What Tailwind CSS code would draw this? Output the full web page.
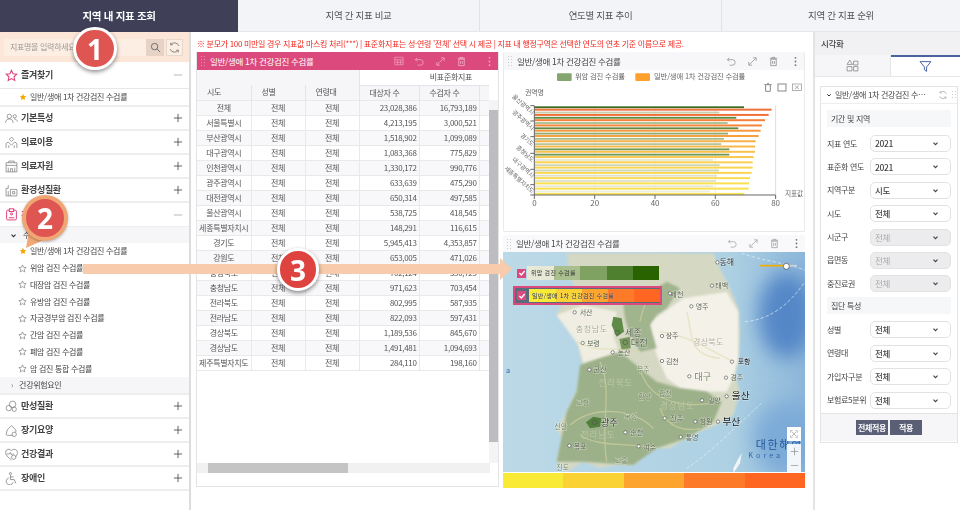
<!DOCTYPE html>
<html lang="ko">
<head>
    <meta charset="UTF-8">
    <meta name="viewport" content="width=device-width, initial-scale=1.0">
    <title>지역 내 지표 조회</title>
    <script src="https://cdn.jsdelivr.net/npm/@tailwindcss/browser@4"></script>
</head>
<body class="relative w-[960px] h-[510px] overflow-hidden bg-white text-[#444] font-['Noto_Sans_CJK_KR','Noto_Sans',sans-serif] text-[8px] tracking-[-0.04em] blur-[0.3px]">
    <!-- icon symbols -->
    <svg class="hidden">
        <symbol id="star" viewBox="0 0 24 24"><path d="M12 2.5l2.9 6.3 6.9.8-5.1 4.7 1.4 6.8L12 17.7l-6.1 3.4 1.4-6.8L2.2 9.6l6.9-.8z"/></symbol>
        <symbol id="undo" viewBox="0 0 24 24"><path d="M7 4L3 8l4 4M3 8h11a6 6 0 0 1 0 12H8" fill="none" stroke="currentColor" stroke-width="1.8"/></symbol>
        <symbol id="expand" viewBox="0 0 24 24"><path d="M4 20L20 4M13 4h7v7M4 13v7h7" fill="none" stroke="currentColor" stroke-width="1.8"/></symbol>
        <symbol id="trash" viewBox="0 0 24 24"><path d="M6 7h12v14H6zM4 5h16M9 5V3h6v2M10 11v6M14 11v6" fill="none" stroke="currentColor" stroke-width="2"/></symbol>
        <symbol id="dots" viewBox="0 0 24 24"><circle cx="12" cy="4" r="2" fill="currentColor"/><circle cx="12" cy="12" r="2" fill="currentColor"/><circle cx="12" cy="20" r="2" fill="currentColor"/></symbol>
        <symbol id="refresh" viewBox="0 0 24 24"><path d="M20 9a8.5 8.5 0 0 0-15-2M4 15a8.5 8.5 0 0 0 15 2M5 3v4h4M19 21v-4h-4" fill="none" stroke="currentColor" stroke-width="1.6"/></symbol>
        <symbol id="chev" viewBox="0 0 12 12"><path d="M2.5 4.5L6 8l3.5-3.5" fill="none" stroke="currentColor" stroke-width="2"/></symbol>
        <symbol id="plus" viewBox="0 0 12 12"><path d="M6 1v10M1 6h10" fill="none" stroke="currentColor" stroke-width="1.1"/></symbol>
        <symbol id="minus" viewBox="0 0 12 12"><path d="M1 6h10" fill="none" stroke="currentColor" stroke-width="1"/></symbol>
    </svg>

    <!-- top tabs -->
    <nav class="flex h-[32px] bg-[#f3f4f8] text-[9.5px] border-b border-[#e6e7ec]">
        <div class="w-[238px] h-[32px] flex items-center justify-center bg-[#3f4058] text-white font-bold text-[10.5px]">지역 내 지표 조회</div>
        <div class="w-[242px] flex items-center justify-center border-r border-[#e1e2e8] text-[#555]">지역 간 지표 비교</div>
        <div class="w-[242px] flex items-center justify-center border-r border-[#e1e2e8] text-[#555]">연도별 지표 추이</div>
        <div class="flex-1 flex items-center justify-center text-[#555]">지역 간 지표 순위</div>
    </nav>

    <div class="flex h-[478px]">
        <!-- left menu -->
        <aside class="w-[191px] shrink-0 border-r-2 border-[#dcdcdc]">
            <div class="h-[30px] bg-[#fbe6d8] flex items-center pl-[4px] gap-[2px]">
                <div class="w-[142px] h-[17px] bg-[#fdeee3] flex items-center pl-[6px] text-[#999]">지표명을 입력하세요</div>
                <div class="w-[18px] h-[17px] -ml-[2px] bg-[#e6d3c6] flex items-center justify-center">
                    <svg class="w-[11px] h-[11px] text-[#666]" viewBox="0 0 24 24" fill="none" stroke="currentColor" stroke-width="2"><circle cx="10" cy="10" r="7"/><path d="M15 15l7 7"/></svg>
                </div>
                <div class="w-[17px] h-[17px] bg-[#fdeee3] border border-[#e5d8ce] flex items-center justify-center">
                    <svg class="w-[13px] h-[13px] text-[#777]"><use href="#refresh"/></svg>
                </div>
            </div>

            <div class="h-[27px] flex items-center justify-between pl-[5px] pr-[6px] border-b border-[#e8e8e8] font-bold text-[9px]">
                <span class="flex items-center gap-[3px]"><svg class="w-[13px] h-[13px] fill-none stroke-[#e0407a] stroke-2"><use href="#star"/></svg>즐겨찾기</span>
                <svg class="w-[10px] h-[10px] text-[#aaa]"><use href="#minus"/></svg>
            </div>
            <div class="h-[18px] flex items-center pl-[19px] gap-[3px] border-b-2 border-[#eee]">
                <svg class="w-[8px] h-[8px] fill-[#f5a800]"><use href="#star"/></svg>일반/생애 1차 건강검진 수검률
            </div>

            <div class="h-[24px] flex items-center justify-between pl-[5px] pr-[6px] border-b-2 border-[#eee] font-bold text-[9px]">
                <span class="flex items-center gap-[3px]"><svg class="w-[13px] h-[13px] text-[#777]" viewBox="0 0 24 24" fill="none" stroke="currentColor" stroke-width="1.3"><circle cx="8" cy="8" r="4"/><circle cx="18" cy="8" r="3"/><path d="M1 20c1-6 3-7 7-7s6 1 7 7M17 13c3 0 5 1 6 5"/></svg>기본특성</span>
                <svg class="w-[10px] h-[10px] text-[#555]"><use href="#plus"/></svg>
            </div>
            <div class="h-[24px] flex items-center justify-between pl-[5px] pr-[6px] border-b-2 border-[#eee] font-bold text-[9px]">
                <span class="flex items-center gap-[3px]"><svg class="w-[13px] h-[13px] text-[#777]" viewBox="0 0 24 24" fill="none" stroke="currentColor" stroke-width="1.3"><path d="M12 2l4 4-4 4-4-4zM2 22v-8l4-3 6 6 6-6 4 3v8M7 22v-5M17 22v-5"/></svg>의료이용</span>
                <svg class="w-[10px] h-[10px] text-[#555]"><use href="#plus"/></svg>
            </div>
            <div class="h-[24px] flex items-center justify-between pl-[5px] pr-[6px] border-b-2 border-[#eee] font-bold text-[9px]">
                <span class="flex items-center gap-[3px]"><svg class="w-[13px] h-[13px] text-[#777]" viewBox="0 0 24 24" fill="none" stroke="currentColor" stroke-width="1.3"><path d="M2 22V5h20v17zM7 5V2h10v3M2 10h20M6 22v-8M18 22v-8M10 22v-6h4v6"/></svg>의료자원</span>
                <svg class="w-[10px] h-[10px] text-[#555]"><use href="#plus"/></svg>
            </div>
            <div class="h-[24px] flex items-center justify-between pl-[5px] pr-[6px] border-b-2 border-[#eee] font-bold text-[9px]">
                <span class="flex items-center gap-[3px]"><svg class="w-[13px] h-[13px] text-[#777]" viewBox="0 0 24 24" fill="none" stroke="currentColor" stroke-width="1.3"><path d="M2 22V8h4V2M2 22h20V10H10v12M14 14h4v4h-4zM6 13v9"/></svg>환경성질환</span>
                <svg class="w-[10px] h-[10px] text-[#555]"><use href="#plus"/></svg>
            </div>
            <div class="h-[24px] flex items-center justify-between pl-[5px] pr-[6px] border-b border-[#eee] font-bold text-[9px] text-[#e0407a]">
                <span class="flex items-center gap-[3px]"><svg class="w-[13px] h-[13px]" viewBox="0 0 24 24" fill="none" stroke="currentColor" stroke-width="1.8"><rect x="3" y="4" width="18" height="18" rx="2"/><rect x="8" y="1.5" width="8" height="5" fill="#fff"/><circle cx="12" cy="11" r="2"/><path d="M7 18h10"/></svg>건강검진</span>
                <svg class="w-[10px] h-[10px] text-[#aaa]"><use href="#minus"/></svg>
            </div>

            <div class="h-[16px] flex items-center pl-[10px] gap-[6px] bg-[#f6f6f8]">
                <svg class="w-[7px] h-[7px] text-[#333]"><use href="#chev"/></svg>수검률
            </div>
            <ul>
                <li class="h-[16.75px] flex items-center pl-[19px] gap-[3px]"><svg class="w-[8px] h-[8px] fill-[#f5a800]"><use href="#star"/></svg>일반/생애 1차 건강검진 수검률</li>
                <li class="h-[16.75px] flex items-center pl-[18px] gap-[3px]"><svg class="w-[9px] h-[9px] fill-none stroke-[#888] stroke-2"><use href="#star"/></svg>위암 검진 수검률</li>
                <li class="h-[16.75px] flex items-center pl-[18px] gap-[3px]"><svg class="w-[9px] h-[9px] fill-none stroke-[#888] stroke-2"><use href="#star"/></svg>대장암 검진 수검률</li>
                <li class="h-[16.75px] flex items-center pl-[18px] gap-[3px]"><svg class="w-[9px] h-[9px] fill-none stroke-[#888] stroke-2"><use href="#star"/></svg>유방암 검진 수검률</li>
                <li class="h-[16.75px] flex items-center pl-[18px] gap-[3px]"><svg class="w-[9px] h-[9px] fill-none stroke-[#888] stroke-2"><use href="#star"/></svg>자궁경부암 검진 수검률</li>
                <li class="h-[16.75px] flex items-center pl-[18px] gap-[3px]"><svg class="w-[9px] h-[9px] fill-none stroke-[#888] stroke-2"><use href="#star"/></svg>간암 검진 수검률</li>
                <li class="h-[16.75px] flex items-center pl-[18px] gap-[3px]"><svg class="w-[9px] h-[9px] fill-none stroke-[#888] stroke-2"><use href="#star"/></svg>폐암 검진 수검률</li>
                <li class="h-[16.75px] flex items-center pl-[18px] gap-[3px]"><svg class="w-[9px] h-[9px] fill-none stroke-[#888] stroke-2"><use href="#star"/></svg>암 검진 통합 수검률</li>
            </ul>
            <div class="h-[18px] flex items-center pl-[11px] gap-[6px] bg-[#f6f6f8] border-b-2 border-[#eee]">
                <span class="text-[#777] text-[8px]">›</span>건강위험요인
            </div>

            <div class="h-[24px] flex items-center justify-between pl-[5px] pr-[6px] border-b-2 border-[#eee] font-bold text-[9px]">
                <span class="flex items-center gap-[3px]"><svg class="w-[13px] h-[13px] text-[#777]" viewBox="0 0 24 24" fill="none" stroke="currentColor" stroke-width="1.3"><circle cx="14" cy="8" r="6"/><circle cx="7" cy="15" r="5"/><circle cx="17" cy="17" r="4"/></svg>만성질환</span>
                <svg class="w-[10px] h-[10px] text-[#555]"><use href="#plus"/></svg>
            </div>
            <div class="h-[24px] flex items-center justify-between pl-[5px] pr-[6px] border-b-2 border-[#eee] font-bold text-[9px]">
                <span class="flex items-center gap-[3px]"><svg class="w-[13px] h-[13px] text-[#777]" viewBox="0 0 24 24" fill="none" stroke="currentColor" stroke-width="1.3"><path d="M2 21l2-10 8-8 8 8v4M4 21h10"/><circle cx="17" cy="19" r="4"/></svg>장기요양</span>
                <svg class="w-[10px] h-[10px] text-[#555]"><use href="#plus"/></svg>
            </div>
            <div class="h-[24px] flex items-center justify-between pl-[5px] pr-[6px] border-b-2 border-[#eee] font-bold text-[9px]">
                <span class="flex items-center gap-[3px]"><svg class="w-[13px] h-[13px] text-[#777]" viewBox="0 0 24 24" fill="none" stroke="currentColor" stroke-width="1.3"><path d="M12 22C5 17 1 13 1 8a6 6 0 0 1 11-3 6 6 0 0 1 11 3c0 4-2 7-4 9"/><circle cx="16" cy="17" r="4"/><path d="M3 11h5l2-3 2 5 2-2h2"/></svg>건강결과</span>
                <svg class="w-[10px] h-[10px] text-[#555]"><use href="#plus"/></svg>
            </div>
            <div class="h-[24px] flex items-center justify-between pl-[5px] pr-[6px] border-b-2 border-[#eee] font-bold text-[9px]">
                <span class="flex items-center gap-[3px]"><svg class="w-[13px] h-[13px] text-[#777]" viewBox="0 0 24 24" fill="none" stroke="currentColor" stroke-width="1.4"><circle cx="10" cy="3" r="2"/><path d="M10 6v8h7l3 7M10 9h6M7 11a6.5 6.5 0 1 0 8 8"/></svg>장애인</span>
                <svg class="w-[10px] h-[10px] text-[#555]"><use href="#plus"/></svg>
            </div>
        </aside>

        <!-- centre -->
        <main class="w-[622px] shrink-0 pl-[5px]">
            <p class="h-[20px] pt-[6px] pl-[1px] leading-[12px] text-[#f02a20] whitespace-nowrap">※ 분모가 100 미만일 경우 지표값 마스킹 처리(***) | 표준화지표는 성·연령 '전체' 선택 시 제공 | 지표 내 행정구역은 선택한 연도의 연초 기준 이름으로 제공.</p>

            <div class="flex gap-[4px]">
                <!-- table panel -->
                <section class="relative w-[303px] h-[435px] border border-[#e4e4e4] border-t-0">
                    <header class="h-[18px] bg-[#dc4a7d] text-white flex items-center pl-[3px] text-[8.5px]">
                        <span class="w-[7px] h-[12px] bg-[radial-gradient(#ee8fb0_1px,transparent_1px)] bg-[length:3px_3px] mr-[3px]"></span>
                        일반/생애 1차 건강검진 수검률
                        <span class="ml-auto flex items-center gap-[10px] pr-[3px] text-[#f0a5bf]">
                            <svg class="w-[10px] h-[10px]" viewBox="0 0 24 24" fill="none" stroke="currentColor" stroke-width="1.6"><path d="M2 3h20v18H2zM2 9h20M2 15h20M9 9v12M16 9v12"/></svg>
                            <svg class="w-[11px] h-[11px]"><use href="#undo"/></svg>
                            <svg class="w-[11px] h-[11px]"><use href="#expand"/></svg>
                            <svg class="w-[11px] h-[11px]"><use href="#trash"/></svg>
                            <svg class="w-[11px] h-[11px] ml-[7px]"><use href="#dots"/></svg>
                        </span>
                    </header>
                    <table class="table-fixed border-collapse w-[292px] text-[#555]">
                        <colgroup><col class="w-[54px]"><col class="w-[54px]"><col class="w-[54px]"><col class="w-[60px]"><col class="w-[60px]"><col class="w-[10px]"></colgroup>
                        <thead class="bg-[#f6f6f8]">
                            <tr class="h-[15px]">
                                <th colspan="3" class="bg-[#f6f6f8]"></th>
                                <th colspan="3" class="font-normal bg-white border-l border-b border-[#e4e4e8] text-right pr-[17px]">비표준화지표</th>
                            </tr>
                            <tr class="h-[15px]">
                                <th class="font-normal text-left pl-[10px] border-r border-[#e4e4e8]">시도</th>
                                <th class="font-normal text-left pl-[10px] border-r border-[#e4e4e8]">성별</th>
                                <th class="font-normal text-left pl-[10px] border-r border-[#e4e4e8]">연령대</th>
                                <th class="font-normal text-left pl-[10px] border-r border-[#e4e4e8]">대상자 수</th>
                                <th class="font-normal text-left pl-[10px] border-r border-[#e4e4e8]">수검자 수</th>
                                <th></th>
                            </tr>
                        </thead>
                        <tbody id="rows"></tbody>
                    </table>
                    <!-- scrollbars of the grid -->
                    <div class="absolute right-0 top-[48px] w-[9px] h-[363px] bg-[#f4f4f4]">
                        <div class="mt-[10px] h-[332px] bg-[#bdbcc0]"></div>
                    </div>
                    <div class="absolute left-0 top-[411px] w-[293px] h-[10px] bg-[#f1f1f1]">
                        <div class="ml-[11px] w-[140px] h-full bg-[#c4c4c4]"></div>
                    </div>
                </section>

                <div class="w-[302px] flex flex-col gap-[3px]">
                    <!-- chart panel -->
                    <section class="h-[180px] border border-[#eaeaea] rounded-[2px] border-t-0">
                        <header class="h-[18px] bg-[#f7f7f9] flex items-center pl-[3px] text-[8.5px]">
                            <span class="w-[7px] h-[12px] bg-[radial-gradient(#ccc_1px,transparent_1px)] bg-[length:3px_3px] mr-[3px]"></span>
                            일반/생애 1차 건강검진 수검률
                            <span class="ml-auto flex items-center gap-[10px] pr-[3px] text-[#999]">
                                <svg class="w-[11px] h-[11px]"><use href="#undo"/></svg>
                                <svg class="w-[11px] h-[11px]"><use href="#expand"/></svg>
                                <svg class="w-[11px] h-[11px]"><use href="#trash"/></svg>
                                <svg class="w-[11px] h-[11px] ml-[1px] text-[#777]"><use href="#dots"/></svg>
                            </span>
                        </header>
                        <svg class="block w-[302px] h-[160px]" viewBox="0 0 302 160" font-family="Noto Sans CJK KR, sans-serif">
                            <g transform="translate(-3,-30) scale(0.3333)">
                                <rect x="168" y="100" width="44" height="23" rx="3" fill="#86a66f"/>
                                <text x="222" y="116" font-size="22" letter-spacing="-0.5" fill="#666">위암 검진 수검률</text>
                                <rect x="403" y="100" width="44" height="23" rx="3" fill="#ffa02e"/>
                                <text x="459" y="116" font-size="22" letter-spacing="-0.5" fill="#666">일반/생애 1차 건강검진 수검률</text>
                                <g fill="none" stroke="#888" stroke-width="3">
                                    <path d="M790 134h22M794 134v20h14v-20M800 134v-4h4"/>
                                    <rect x="831" y="132" width="24" height="21"/>
                                    <rect x="874" y="132" width="28" height="20" stroke-width="2"/>
                                    <path d="M882 137l12 10M894 137l-12 10" stroke-width="2"/>
                                </g>
                                <text x="72" y="165" font-size="21" fill="#666">권역명</text>
                                <g stroke="#e6e6e6" stroke-width="2">
                                    <path d="M281 197v268M462 197v268M643 197v268"/>
                                </g>
                                <path d="M824 197v268" stroke="#ccc" stroke-width="2"/>
                                <g id="bars"></g>
                                <path d="M100 197v268h724" fill="none" stroke="#666" stroke-width="3"/>
                                <path d="M88 197h12M88 243h12M88 290h12M88 340h12M88 388h12M88 434h12M88 465h12M100 465v12M281 465v12M462 465v12M643 465v12M824 465v12" stroke="#666" stroke-width="3"/>
                                <g font-size="18" fill="#666" text-anchor="end" letter-spacing="-0.5">
                                    <text transform="translate(92,225) rotate(42)">울산광역시</text>
                                    <text transform="translate(92,272) rotate(42)">광주광역시</text>
                                    <text transform="translate(92,320) rotate(42)">경기도</text>
                                    <text transform="translate(92,367) rotate(42)">충청남도</text>
                                    <text transform="translate(92,414) rotate(42)">대구광역시</text>
                                    <text transform="translate(92,461) rotate(42)">세종특별자치도</text>
                                </g>
                                <g font-size="24" fill="#666" text-anchor="middle">
                                    <text x="100" y="497">0</text><text x="281" y="497">20</text><text x="462" y="497">40</text><text x="643" y="497">60</text><text x="824" y="497">80</text>
                                </g>
                                <text x="852" y="469" font-size="20" fill="#666">지표값</text>
                            </g>
                        </svg>
                    </section>

                    <!-- map panel -->
                    <section class="relative h-[253px]">
                        <header class="h-[17px] bg-[#f9f9fb] flex items-center pl-[3px] text-[8.5px]">
                            <span class="w-[7px] h-[12px] bg-[radial-gradient(#ccc_1px,transparent_1px)] bg-[length:3px_3px] mr-[3px]"></span>
                            일반/생애 1차 건강검진 수검률
                            <span class="ml-auto flex items-center gap-[10px] pr-[3px] text-[#aaa]">
                                <svg class="w-[11px] h-[11px]"><use href="#undo"/></svg>
                                <svg class="w-[11px] h-[11px]"><use href="#expand"/></svg>
                                <svg class="w-[11px] h-[11px]"><use href="#trash"/></svg>
                                <svg class="w-[11px] h-[11px] ml-[1px] text-[#777]"><use href="#dots"/></svg>
                            </span>
                        </header>
                        <svg class="block w-[302px] h-[220px]" viewBox="0 0 302 220" font-family="Noto Sans CJK KR, sans-serif">
                            <defs>
                                <linearGradient id="sea" x1="0" y1="0" x2="1" y2="0">
                                    <stop offset="0" stop-color="#bcd9e7"/><stop offset="0.75" stop-color="#add1e3"/><stop offset="1" stop-color="#8db6da"/>
                                </linearGradient>
                                <filter id="soft"><feGaussianBlur stdDeviation="3"/></filter>
                                <filter id="softer" x="-100%" y="-100%" width="300%" height="300%"><feGaussianBlur stdDeviation="28"/></filter>
                            </defs>
                            <rect width="302" height="220" fill="url(#sea)"/>
                            <g transform="translate(-3,-17) scale(0.3333)">
                                <ellipse cx="860" cy="240" rx="85" ry="130" fill="#5587c8" filter="url(#softer)"/>
                                <ellipse cx="870" cy="610" rx="110" ry="110" fill="#7dabd8" filter="url(#softer)"/>
                                <path d="M200 55H640L660 100L690 160L715 220L720 300L715 370L705 420L720 470L700 540L650 570L600 590L560 610L510 640L470 640L440 650L400 690L350 690L300 700L250 680L200 710L170 680L190 620L170 580L200 530L230 470L250 400L240 350L220 290L170 240L190 200L230 175L210 120Z" fill="#d5d8c3" filter="url(#soft)"/>
                                <path d="M450 260L550 190L680 170L715 230L715 370L700 430L680 470L620 470L540 460L500 430L470 360L450 300Z" fill="#f3f1e8" filter="url(#soft)"/>
                                <path d="M170 240L250 210L350 230L340 300L360 360L300 370L250 385L235 330Z" fill="#f0eee2" filter="url(#soft)"/>
                                <path d="M240 390L300 370L360 350L420 400L470 440L540 460L620 470L665 500L640 560L560 610L470 640L400 690L250 680L170 680L200 530L230 470Z" fill="#9cb189" filter="url(#soft)"/>
                                <path d="M370 210L400 190L470 160L500 140L540 160L500 220L470 240L450 270L470 340L420 350L390 300L375 250Z" fill="#a0b48d" filter="url(#soft)"/>
                                <path d="M340 245L365 250L372 290L350 305L335 270Z" fill="#5f8a48"/>
                                <path d="M358 312L390 305L392 340L365 346Z" fill="#76985c"/>
                                <path d="M258 562L280 545L305 550L300 575L270 580Z" fill="#527f3c"/>
                                <path d="M210 570C280 510 400 520 460 580M300 380C340 470 300 560 320 680M420 400C440 480 520 530 660 500M480 520C500 580 560 590 600 580M560 230C580 300 560 360 660 370M480 290C560 300 620 340 700 380M230 320C300 360 340 330 420 350M500 60C470 140 430 200 420 260M240 600C300 640 380 620 470 640" fill="none" stroke="#dcd8a6" stroke-width="4" opacity="0.55"/>
                                <path d="M725 55C780 75 860 85 915 105M735 260C800 255 860 220 915 140M560 700C650 640 720 560 790 500" fill="none" stroke="#e8f1f6" stroke-width="2" stroke-dasharray="10 6"/>
                                <g font-size="24" fill="#5a6350" text-anchor="middle" stroke="#fff" stroke-opacity="0.45" stroke-width="3" paint-order="stroke">
                                    <text x="680" y="90" fill="#333">동해</text><text x="665" y="160" font-size="21">태백</text><text x="530" y="185" font-size="22">제천</text>
                                    <text x="606" y="222" font-size="21">영주</text><text x="258" y="240" font-size="21">서산</text><text x="275" y="292" fill="#a8ad97" letter-spacing="2">충청남도</text>
                                    <text x="400" y="302" font-size="28">세종</text><text x="418" y="332" font-size="28">대전</text><text x="516" y="310" font-size="21">상주</text>
                                    <text x="625" y="330" fill="#b5b29c" letter-spacing="1">경상북도</text><text x="280" y="332" font-size="21">보령</text><text x="372" y="360" font-size="21">논산</text>
                                    <text x="517" y="386" font-size="21">김천</text><text x="732" y="388" font-size="21" fill="#222">포항</text><text x="300" y="412" font-size="22">군산</text>
                                    <text x="430" y="410" font-size="21" fill="#758460">무주</text><text x="608" y="434" font-size="27" fill="#758460">대구</text><text x="710" y="434" font-size="21">경주</text>
                                    <text x="347" y="454" fill="#bcc6a8" letter-spacing="2" font-size="26" stroke="none">전라북도</text><text x="496" y="482" font-size="21" fill="#758460">합천</text>
                                    <text x="434" y="492" font-size="21" fill="#758460">함양</text><text x="532" y="522" fill="#bcc6a8" letter-spacing="2" font-size="26" stroke="none">경상남도</text><text x="643" y="505" font-size="21">밀양</text>
                                    <text x="248" y="510" font-size="21" fill="#758460">고창</text><text x="722" y="492" font-size="29" fill="#111">울산</text><text x="530" y="558" font-size="22">진주</text>
                                    <text x="618" y="566" font-size="21">창원</text><text x="694" y="570" font-size="29" fill="#111">부산</text><text x="328" y="572" font-size="28" fill="#444">광주</text>
                                    <text x="392" y="552" font-size="21" fill="#758460">곡성</text><text x="294" y="610" fill="#bcc6a8" letter-spacing="2" font-size="26" stroke="none">전라남도</text>
                                    <text x="410" y="600" font-size="21">순천</text><text x="240" y="641" font-size="21">목포</text><text x="449" y="644" font-size="21">여수</text>
                                    <text x="576" y="615" font-size="21">통영</text><text x="364" y="684" font-size="21" fill="#758460">고흥</text><text x="188" y="706" font-size="21" fill="#758460">진도</text>
                                    <text x="182" y="582" font-size="21" fill="#758460">신안</text>
                                </g>
                                <text x="838" y="642" font-size="33" fill="#24559a" text-anchor="middle" letter-spacing="5">대한해협</text>
                                <text x="745" y="668" font-size="22" fill="#3a68a8" letter-spacing="9">Korea</text>
                                <text x="18" y="414" font-size="22" fill="#3a68a8">a</text>
                                <path d="M700 700c15-30 25-45 25-45l-5 30-20 30z" fill="#f2f5f6"/>
                                <path d="M780 92h78" stroke="#f4ae00" stroke-width="5"/><path d="M863 92h28" stroke="#cfd3d6" stroke-width="5"/>
                                <circle cx="859" cy="94" r="9" fill="#fff" stroke="#444" stroke-width="2"/>
                                <g fill="#fff" stroke="#555" stroke-width="2">
                                    <circle cx="352" cy="293" r="7" fill="none"/><circle cx="376" cy="322" r="7" fill="none"/><circle cx="284" cy="562" r="7" fill="none"/>
                                    <circle cx="652" cy="82" r="5"/><circle cx="636" cy="152" r="5"/><circle cx="510" cy="175" r="5"/><circle cx="574" cy="214" r="5"/><circle cx="224" cy="232" r="5"/><circle cx="486" cy="303" r="5"/><circle cx="248" cy="324" r="5"/><circle cx="338" cy="352" r="5"/><circle cx="486" cy="378" r="5"/><circle cx="696" cy="380" r="5"/><circle cx="268" cy="404" r="5"/><circle cx="568" cy="424" r="5"/><circle cx="678" cy="428" r="5"/><circle cx="680" cy="484" r="5"/><circle cx="606" cy="496" r="5"/><circle cx="494" cy="550" r="5"/><circle cx="586" cy="560" r="5"/><circle cx="654" cy="560" r="5"/><circle cx="376" cy="592" r="5"/><circle cx="208" cy="632" r="5"/><circle cx="416" cy="634" r="5"/><circle cx="542" cy="606" r="5"/>
                                </g>
                            </g>
                        </svg>
                        <div class="flex h-[15px] mt-[1px]">
                            <div class="flex-1 bg-[#f9ea36]"></div><div class="flex-1 bg-[#fbd233]"></div><div class="flex-1 bg-[#fca42e]"></div><div class="flex-1 bg-[#fd7b28]"></div><div class="flex-1 bg-[#fe6622]"></div>
                        </div>

                        <!-- layer legend over the map -->
                        <div class="absolute left-[14px] top-[31px] flex items-center gap-[1px]">
                            <span class="w-[9px] h-[9px] bg-[#dc4a7d] flex items-center justify-center"><svg class="w-[8px] h-[8px]" viewBox="0 0 12 12" fill="none" stroke="#fff" stroke-width="2"><path d="M2 6l3 3 5-6"/></svg></span>
                            <div class="relative flex w-[132px] h-[14px]">
                                <span class="w-[27px] bg-[#e8e8d6]"></span><span class="w-[26px] bg-[#a9bf8f]"></span><span class="w-[27px] bg-[#7fa263]"></span><span class="w-[26px] bg-[#4f8030]"></span><span class="w-[26px] bg-[#286300]"></span>
                                <span class="absolute left-[4px] top-0 leading-[14px] text-[6px] tracking-[0.05em] text-[#333]">위암 검진 수검률</span>
                            </div>
                        </div>
                        <div class="absolute left-[10px] top-[51px] w-[149px] h-[19px] bg-[#5b6b7c] border-2 border-[#dc4a7d] flex items-center pl-[2px] gap-[3px]">
                            <span class="w-[9px] h-[9px] bg-[#dc4a7d] flex items-center justify-center"><svg class="w-[8px] h-[8px]" viewBox="0 0 12 12" fill="none" stroke="#fff" stroke-width="2"><path d="M2 6l3 3 5-6"/></svg></span>
                            <div class="relative flex w-[131px] h-[13px]">
                                <span class="w-[27px] bg-[#f9ea36]"></span><span class="w-[26px] bg-[#fbd233]"></span><span class="w-[26px] bg-[#fca42e]"></span><span class="w-[26px] bg-[#fd7b28]"></span><span class="w-[26px] bg-[#fe6622]"></span>
                                <span class="absolute left-[3px] top-0 leading-[13px] text-[6px] tracking-[0.05em] text-[#222] [text-shadow:0_0_1px_#fff]">일반/생애 1차 건강검진 수검률</span>
                            </div>
                        </div>
                        <!-- map zoom buttons -->
                        <div class="absolute left-[284px] top-[192px] w-[14px] flex flex-col">
                            <div class="h-[14px] bg-white flex items-center justify-center"><svg class="w-[8px] h-[8px]" viewBox="0 0 12 12" fill="none" stroke="#999"><path d="M1 4V1h3M8 1h3v3M11 8v3H8M4 11H1V8M3 3l6 6M9 3l-6 6"/></svg></div>
                            <div class="h-[3px]"></div>
                            <div class="h-[14px] bg-white/90 flex items-center justify-center"><svg class="w-[9px] h-[9px] text-[#999]"><use href="#plus"/></svg></div>
                            <div class="h-[14px] bg-white/90 flex items-center justify-center"><svg class="w-[9px] h-[9px] text-[#999]"><use href="#minus"/></svg></div>
                        </div>
                    </section>
                </div>
            </div>
        </main>

        <!-- right filter panel -->
        <aside class="flex-1 border-l-2 border-[#e4e4e4]">
            <div class="h-[23px] bg-[#f1f1f3] flex items-center pl-[6px] font-medium text-[8.5px]">시각화</div>
            <div class="flex h-[22px] border-b border-[#e6e6e6]">
                <div class="w-[76px] bg-[#f6f6f8] flex items-center justify-center border-r border-[#e6e6e6] text-[#888]">
                    <svg class="w-[13px] h-[13px]" viewBox="0 0 24 24" fill="none" stroke="currentColor" stroke-width="1.5"><path d="M7 2l5 8H2zM14 4h8v7h-8zM2 14h9v8H2zM14 14h8v8h-8z"/></svg>
                </div>
                <div class="flex-1 flex items-center justify-center border-t-2 border-[#4a62a0] text-[#4a62a0]">
                    <svg class="w-[13px] h-[13px]" viewBox="0 0 24 24" fill="none" stroke="currentColor" stroke-width="1.8"><path d="M2 3h20l-8 10v8l-4-3v-5z"/></svg>
                </div>
            </div>
            <div class="ml-[5px] mt-[9px] w-[138px] h-[357px] border border-[#e4e4e4] text-[8px]">
                <div class="h-[17px] flex items-center pl-[5px] gap-[3px] border-b border-[#eee]">
                    <svg class="w-[6px] h-[6px] text-[#333]"><use href="#chev"/></svg>
                    <span>일반/생애 1차 건강검진 수⋯</span>
                    <svg class="w-[10px] h-[10px] ml-auto text-[#999]"><use href="#refresh"/></svg>
                    <span class="w-[5px] h-[10px] mr-[1px] bg-[radial-gradient(#ccc_1px,transparent_1px)] bg-[length:3px_3px]"></span>
                </div>
                <div class="h-[calc(100%-46px)] px-[6px] pt-[6px]">
                    <div class="h-[17px] leading-[17px] pl-[4px] bg-[#f6f7f9] mb-[8px]">기간 및 지역</div>
                    <div class="flex flex-col gap-[6.4px]" id="filterA"></div>
                    <div class="h-[17px] leading-[17px] pl-[4px] bg-[#f6f7f9] mt-[5px] mb-[7px]">집단 특성</div>
                    <div class="flex flex-col gap-[6.4px]" id="filterB"></div>
                </div>
                <div class="h-[28px] bg-[#f6f6f8] border-t border-[#e4e4e4] flex items-center justify-center gap-[2px] text-white font-bold">
                    <button class="w-[32px] h-[15px] bg-[#5a5f76]">전체적용</button>
                    <button class="w-[32px] h-[15px] bg-[#5a5f76]">적용</button>
                </div>
            </div>
        </aside>
    </div>

    <!-- guide overlays: arrow and numbered callouts -->
    <div class="absolute left-[83px] top-[264px] w-[418px] h-[10px] bg-[#f7cbab]"></div>
    <div class="absolute left-[500px] top-[258px] w-0 h-0 border-y-[11px] border-y-transparent border-l-[12px] border-l-[#f7cbab]"></div>

    <div class="absolute left-[73px] top-[27px] w-[44px] h-[43px] rounded-full bg-[#df5552] border-[3px] border-white shadow-[0_2px_4px_rgba(0,0,0,0.45)] flex items-center justify-center text-white text-[28px] font-bold tracking-normal font-['Open_Sans',sans-serif]">1</div>

    <svg class="absolute left-[20px] top-[220px] w-[32px] h-[32px]" viewBox="0 0 32 32"><path d="M6 28L10 5L28 18z" fill="#f2a878"/></svg>
    <div class="absolute left-[22px] top-[195px] w-[46px] h-[46px] rounded-full bg-[#df5552] border-[4px] border-[#f0a574] shadow-[0_1px_3px_rgba(0,0,0,0.3)] flex items-center justify-center text-white text-[28px] font-bold tracking-normal font-['Open_Sans',sans-serif]">2</div>

    <div class="absolute left-[277px] top-[248px] w-[42px] h-[43px] rounded-full bg-[#df4340] border-[3px] border-white shadow-[0_2px_4px_rgba(0,0,0,0.45)] flex items-center justify-center text-white text-[28px] font-bold tracking-normal font-['Open_Sans',sans-serif]">3</div>

    <script>
        // table rows: name, target, screened
        const data = [
            ['전체','23,028,386','16,793,189'],['서울특별시','4,213,195','3,000,521'],['부산광역시','1,518,902','1,099,089'],
            ['대구광역시','1,083,368','775,829'],['인천광역시','1,330,172','990,776'],['광주광역시','633,639','475,290'],
            ['대전광역시','650,314','497,585'],['울산광역시','538,725','418,545'],['세종특별자치시','148,291','116,615'],
            ['경기도','5,945,413','4,353,857'],['강원도','653,005','471,026'],['충청북도','702,124','530,723'],
            ['충청남도','971,623','703,454'],['전라북도','802,995','587,935'],['전라남도','822,093','597,431'],
            ['경상북도','1,189,536','845,670'],['경상남도','1,491,481','1,094,693'],['제주특별자치도','284,110','198,160']
        ];
        document.getElementById('rows').innerHTML = data.map((r, i) => `
            <tr class="h-[15px] ${i % 2 ? 'bg-white' : 'bg-[#f8f8fb]'} border-y border-[#e9e9ec]">
                <td class="text-center border-r border-[#e9e9ec] whitespace-nowrap">${r[0]}</td>
                <td class="text-center border-r border-[#e9e9ec]">전체</td>
                <td class="text-center border-r border-[#e9e9ec]">전체</td>
                <td class="text-right pr-[2px] border-r border-[#e9e9ec]">${r[1]}</td>
                <td class="text-right pr-[2px] border-r border-[#e9e9ec]">${r[2]}</td>
                <td></td>
            </tr>`).join('');

        // chart bars, in the zoomed coordinates of the chart group
        const greens = [[729,'#3a6b1e'],[655,'#c5d0b0'],[706,'#5e8a42'],[680,'#a9bf8f'],[712,'#5e8a42'],[681,'#8fab72'],[669,'#a9bf8f'],[661,'#b6c6a0'],[685,'#6f9855'],[685,'#6f9855'],[636,'#e8e6d4'],[656,'#cdd6bb'],[654,'#cdd6bb'],[648,'#dfe0cc'],[645,'#dfe0cc'],[637,'#e8e6d4'],[627,'#eeeee0']];
        const oranges = [[812,'#f0703a'],[803,'#f0703a'],[792,'#f5803a'],[783,'#f5853a'],[779,'#f59a3e'],[773,'#f6a040'],[764,'#f8b04a'],[762,'#f8b84a'],[762,'#f8c04c'],[758,'#f9c84e'],[755,'#fad04e'],[755,'#fad650'],[752,'#fad650'],[747,'#fadc52'],[744,'#fae052'],[743,'#fae052'],[730,'#fae652']];
        document.getElementById('bars').innerHTML = greens.map((g, i) => {
            const y = 199 + i * 15.8;
            return `<rect x="100" y="${y}" width="${g[0] - 100}" height="5.5" fill="${g[1]}"/><rect x="100" y="${y + 7}" width="${oranges[i][0] - 100}" height="6" fill="${oranges[i][1]}"/>`;
        }).join('');

        // filter selects
        const select = (label, value, off) => `
            <div class="flex items-center h-[17px]">
                <span class="w-[43px] shrink-0 whitespace-nowrap">${label}</span>
                <span class="w-[81px] h-[17px] rounded-[5px] border border-[#e2e2e2] flex items-center justify-between pl-[4px] pr-[11px] ${off ? 'bg-[#ececee] text-[#aaa]' : 'bg-white text-[#444] font-medium'} text-[8.5px]">
                    ${value}<svg class="w-[7px] h-[7px] text-[#444]"><use href="#chev"/></svg>
                </span>
            </div>`;
        document.getElementById('filterA').innerHTML = [
            ['지표 연도','2021'],['표준화 연도','2021'],['지역구분','시도'],['시도','전체'],['시군구','전체',1],['읍면동','전체',1],['중진료권','전체',1]
        ].map(f => select(...f)).join('');
        document.getElementById('filterB').innerHTML = [
            ['성별','전체'],['연령대','전체'],['가입자구분','전체'],['보험료5분위','전체']
        ].map(f => select(...f)).join('');
    </script>
</body>
</html>
